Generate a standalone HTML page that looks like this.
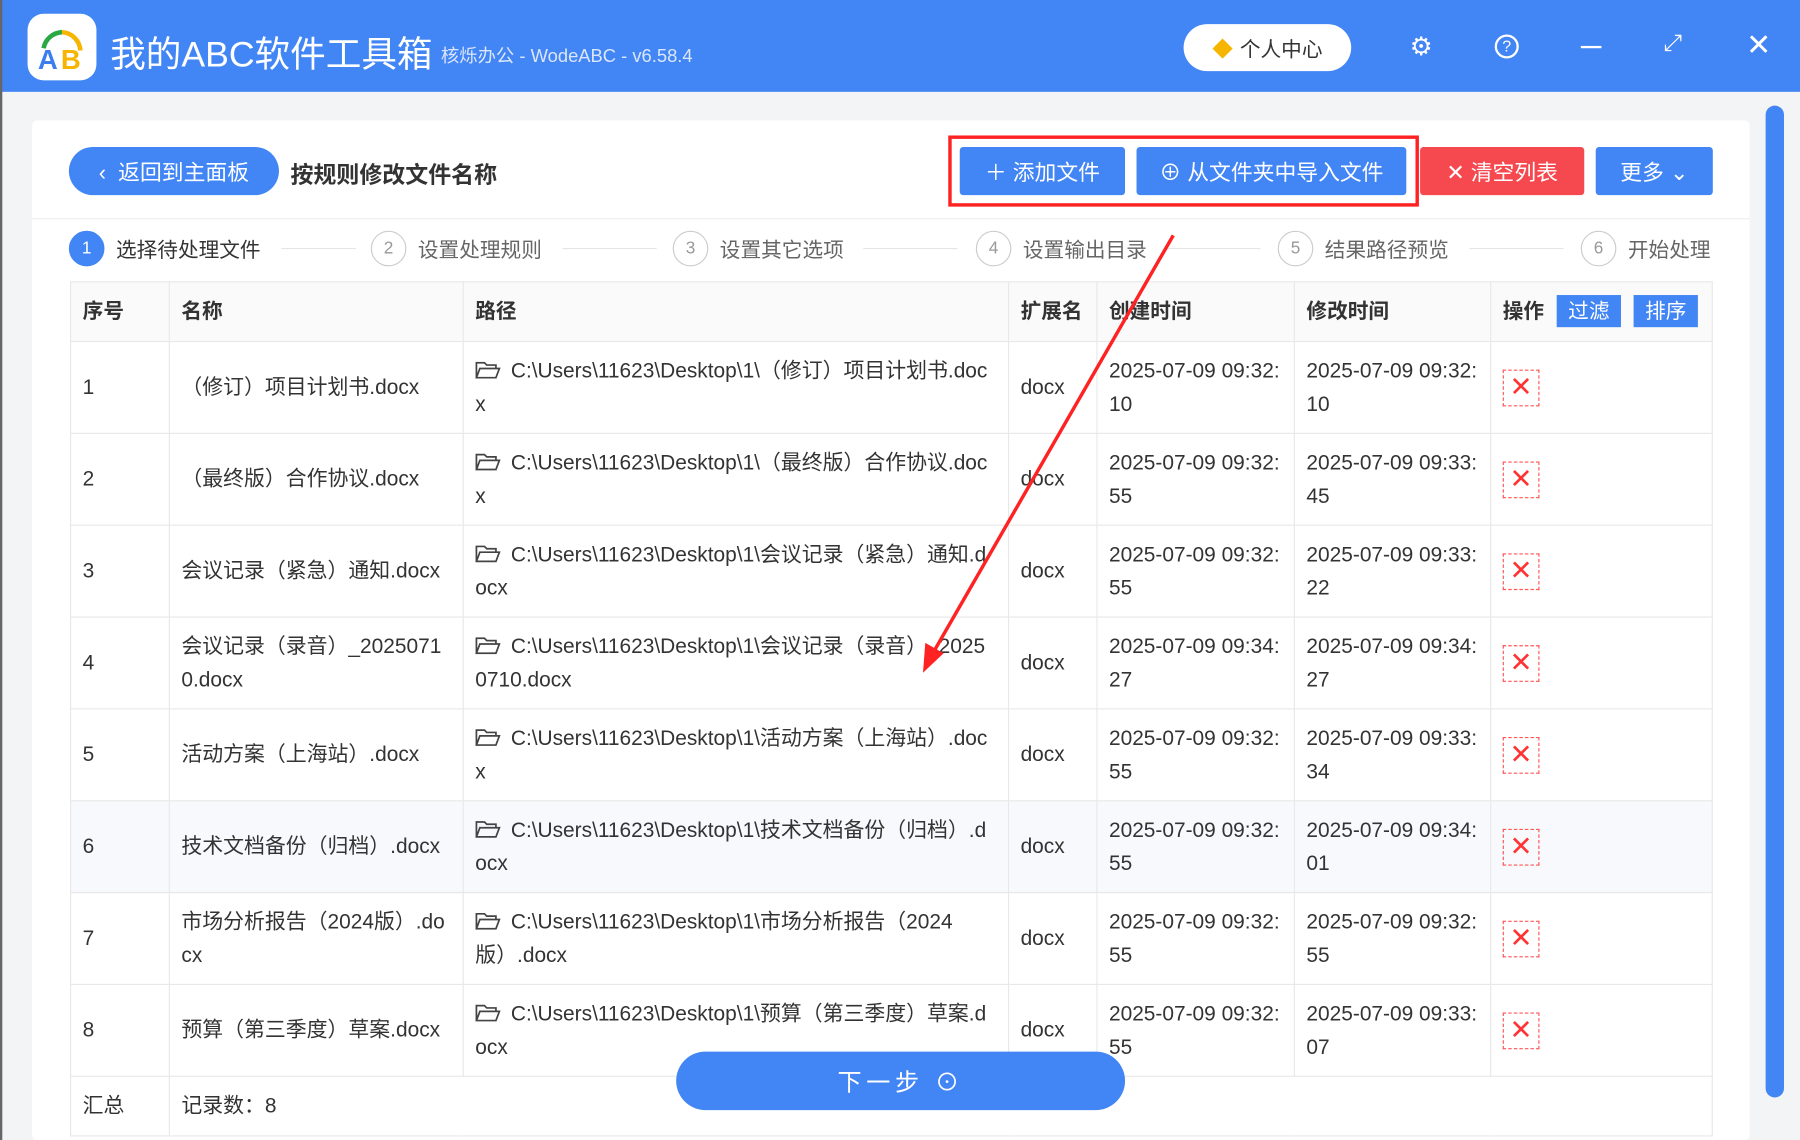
<!DOCTYPE html>
<html><head><meta charset="utf-8"><style>
*{box-sizing:border-box;margin:0;padding:0}
body{width:1800px;height:1140px;overflow:hidden;background:#fff;font-family:"Liberation Sans","Noto Sans CJK SC",sans-serif}
#s{width:1568px;height:993px;transform:scale(1.148);transform-origin:0 0;position:relative;background:#f3f4f6;color:#333}
.a{position:absolute}
.hdr{left:0;top:0;width:1568px;height:80px;background:#4285f4}
.btn{position:absolute;height:42px;border-radius:3px;color:#fff;font-size:19px;display:flex;align-items:center;justify-content:center;gap:8px}
.step{position:absolute;top:201px;font-size:18px;color:#666;display:flex;align-items:center;gap:10px}
.step i{font-style:normal;width:31px;height:31px;border:1px solid #ccc;border-radius:50%;display:flex;align-items:center;justify-content:center;font-size:15px;color:#999}
.ln{position:absolute;top:216px;height:1px;background:#e5e5e5}
table{position:absolute;left:61px;top:245px;width:1431px;border-collapse:collapse;font-size:18.2px;color:#333;table-layout:fixed}
td,th{border:1px solid #e8e8e8;padding:0 10px;vertical-align:middle;line-height:29px;text-align:left;word-break:break-all}
th{height:52px;font-weight:bold;font-size:18px}
tr.r td{height:80px}
tr.alt td{background:#f7f9fc}
.x{width:32px;height:32px;border:1px dashed #f55;color:#f33;display:flex;align-items:center;justify-content:center;font-size:24px}
.f{display:inline-block;width:22px;height:15px;margin-right:9px;vertical-align:-1px}
</style></head><body><div id="s">
<div class="a hdr"></div>
<div class="a" style="left:0;top:0;width:2px;height:993px;background:#666"></div>
<div class="a" style="left:24px;top:12px;width:60px;height:58px;background:#fff;border-radius:14px"></div>
<svg class="a" style="left:24px;top:12px" width="60" height="58"><path d="M14 30 A17 17 0 0 1 30 16" stroke="#2aa844" stroke-width="4" fill="none"/><path d="M30 16 A17 17 0 0 1 46 32" stroke="#f6b500" stroke-width="4" fill="none"/><text x="9" y="48" font-size="24" font-weight="bold" fill="#3a7ef0" font-family="Liberation Sans">A</text><text x="29" y="48" font-size="24" font-weight="bold" fill="#f6b500" font-family="Liberation Sans">B</text></svg>
<div class="a" style="left:96px;top:22px;color:#fff;font-size:31px">我的ABC软件工具箱</div>
<div class="a" style="left:384px;top:35px;color:#dbe6fb;font-size:16px">核烁办公 - WodeABC - v6.58.4</div>
<div class="a" style="left:1031px;top:21px;width:146px;height:41px;background:#fff;border-radius:21px;font-size:18px;display:flex;align-items:center;justify-content:center;gap:6px"><span style="color:#f6b500">◆</span>个人中心</div>
<div class="a" style="left:1228px;top:28px;color:#fff;font-size:22px">⚙</div>
<div class="a" style="left:1302px;top:30px;width:21px;height:21px;border:2px solid #fff;border-radius:50%;color:#fff;font-size:14px;text-align:center;line-height:17px">?</div>
<div class="a" style="left:1377px;top:40px;width:18px;height:2px;background:#fff"></div>
<div class="a" style="left:1449px;top:27px;color:#fff;font-size:20px">⤢</div>
<div class="a" style="left:1521px;top:24px;color:#fff;font-size:26px">✕</div>
<div class="a" style="left:28px;top:105px;width:1496px;height:888px;background:#fff;border-radius:4px"></div>
<div class="a" style="left:1538px;top:92px;width:16px;height:864px;background:#4285f4;border-radius:8px"></div>
<div class="btn" style="left:60px;top:128px;width:183px;background:#4285f4;border-radius:21px">‹&nbsp; 返回到主面板</div>
<div class="a" style="left:253px;top:136px;font-size:20px;font-weight:bold">按规则修改文件名称</div>
<div class="a" style="left:826px;top:118px;width:410px;height:62px;border:3px solid #f22"></div>
<div class="btn" style="left:836px;top:128px;width:144px;background:#4285f4">＋ 添加文件</div>
<div class="btn" style="left:990px;top:128px;width:235px;background:#4285f4">⊕ 从文件夹中导入文件</div>
<div class="btn" style="left:1237px;top:128px;width:143px;background:#f5484f">✕ 清空列表</div>
<div class="btn" style="left:1390px;top:128px;width:102px;background:#4285f4">更多 ⌄</div>
<div class="a" style="left:28px;top:190px;width:1496px;height:1px;background:#eee"></div>
<div class="step" style="left:60px;color:#333"><i style="background:#4285f4;border-color:#4285f4;color:#fff">1</i>选择待处理文件</div>
<div class="ln" style="left:245px;width:65px"></div>
<div class="step" style="left:323px"><i>2</i>设置处理规则</div>
<div class="ln" style="left:490px;width:82px"></div>
<div class="step" style="left:586px"><i>3</i>设置其它选项</div>
<div class="ln" style="left:752px;width:82px"></div>
<div class="step" style="left:850px"><i>4</i>设置输出目录</div>
<div class="ln" style="left:1016px;width:82px"></div>
<div class="step" style="left:1113px"><i>5</i>结果路径预览</div>
<div class="ln" style="left:1280px;width:82px"></div>
<div class="step" style="left:1377px"><i>6</i>开始处理</div>
<table>
<colgroup><col style="width:86px"><col style="width:256px"><col style="width:475px"><col style="width:77px"><col style="width:172px"><col style="width:171px"><col></colgroup>
<tr style="background:#fafafa"><th>序号</th><th>名称</th><th>路径</th><th>扩展名</th><th>创建时间</th><th>修改时间</th><th style="word-break:keep-all;white-space:nowrap">操作 <span style="background:#4285f4;color:#fff;font-weight:normal;padding:4px 10px;margin-left:6px">过滤</span> <span style="background:#4285f4;color:#fff;font-weight:normal;padding:4px 10px;margin-left:6px">排序</span></th></tr>
<tr class="r"><td>1</td><td>（修订）项目计划书.docx</td><td><svg class="f" viewBox="0 0 22 15"><path d="M1 14V1h7l2 2h8v3M1 14l3-8h17l-3 8z" fill="none" stroke="#444" stroke-width="1.5"/></svg>C:\Users\11623\Desktop\1\（修订）项目计划书.docx</td><td>docx</td><td>2025-07-09 09:32:10</td><td>2025-07-09 09:32:10</td><td><div class="x">✕</div></td></tr>
<tr class="r"><td>2</td><td>（最终版）合作协议.docx</td><td><svg class="f" viewBox="0 0 22 15"><path d="M1 14V1h7l2 2h8v3M1 14l3-8h17l-3 8z" fill="none" stroke="#444" stroke-width="1.5"/></svg>C:\Users\11623\Desktop\1\（最终版）合作协议.docx</td><td>docx</td><td>2025-07-09 09:32:55</td><td>2025-07-09 09:33:45</td><td><div class="x">✕</div></td></tr>
<tr class="r"><td>3</td><td>会议记录（紧急）通知.docx</td><td><svg class="f" viewBox="0 0 22 15"><path d="M1 14V1h7l2 2h8v3M1 14l3-8h17l-3 8z" fill="none" stroke="#444" stroke-width="1.5"/></svg>C:\Users\11623\Desktop\1\会议记录（紧急）通知.docx</td><td>docx</td><td>2025-07-09 09:32:55</td><td>2025-07-09 09:33:22</td><td><div class="x">✕</div></td></tr>
<tr class="r"><td>4</td><td>会议记录（录音）_20250710.docx</td><td><svg class="f" viewBox="0 0 22 15"><path d="M1 14V1h7l2 2h8v3M1 14l3-8h17l-3 8z" fill="none" stroke="#444" stroke-width="1.5"/></svg>C:\Users\11623\Desktop\1\会议记录（录音）_20250710.docx</td><td>docx</td><td>2025-07-09 09:34:27</td><td>2025-07-09 09:34:27</td><td><div class="x">✕</div></td></tr>
<tr class="r"><td>5</td><td>活动方案（上海站）.docx</td><td><svg class="f" viewBox="0 0 22 15"><path d="M1 14V1h7l2 2h8v3M1 14l3-8h17l-3 8z" fill="none" stroke="#444" stroke-width="1.5"/></svg>C:\Users\11623\Desktop\1\活动方案（上海站）.docx</td><td>docx</td><td>2025-07-09 09:32:55</td><td>2025-07-09 09:33:34</td><td><div class="x">✕</div></td></tr>
<tr class="r alt"><td>6</td><td>技术文档备份（归档）.docx</td><td><svg class="f" viewBox="0 0 22 15"><path d="M1 14V1h7l2 2h8v3M1 14l3-8h17l-3 8z" fill="none" stroke="#444" stroke-width="1.5"/></svg>C:\Users\11623\Desktop\1\技术文档备份（归档）.docx</td><td>docx</td><td>2025-07-09 09:32:55</td><td>2025-07-09 09:34:01</td><td><div class="x">✕</div></td></tr>
<tr class="r"><td>7</td><td>市场分析报告（2024版）.docx</td><td><svg class="f" viewBox="0 0 22 15"><path d="M1 14V1h7l2 2h8v3M1 14l3-8h17l-3 8z" fill="none" stroke="#444" stroke-width="1.5"/></svg>C:\Users\11623\Desktop\1\市场分析报告（2024版）.docx</td><td>docx</td><td>2025-07-09 09:32:55</td><td>2025-07-09 09:32:55</td><td><div class="x">✕</div></td></tr>
<tr class="r"><td>8</td><td>预算（第三季度）草案.docx</td><td><svg class="f" viewBox="0 0 22 15"><path d="M1 14V1h7l2 2h8v3M1 14l3-8h17l-3 8z" fill="none" stroke="#444" stroke-width="1.5"/></svg>C:\Users\11623\Desktop\1\预算（第三季度）草案.docx</td><td>docx</td><td>2025-07-09 09:32:55</td><td>2025-07-09 09:33:07</td><td><div class="x">✕</div></td></tr>
<tr><td style="height:52px">汇总</td><td colspan="6">记录数：8</td></tr>
</table>
<svg class="a" style="left:0;top:0" width="1568" height="993"><line x1="1022" y1="205" x2="812" y2="570" stroke="#f22" stroke-width="3"/><polygon points="804,586 806,560 822,569" fill="#f22"/></svg>
<div class="btn" style="left:589px;top:916px;width:391px;height:51px;border-radius:26px;background:#4285f4;font-size:21px;letter-spacing:4px">下一步 ⊙</div>
</div></body></html>
